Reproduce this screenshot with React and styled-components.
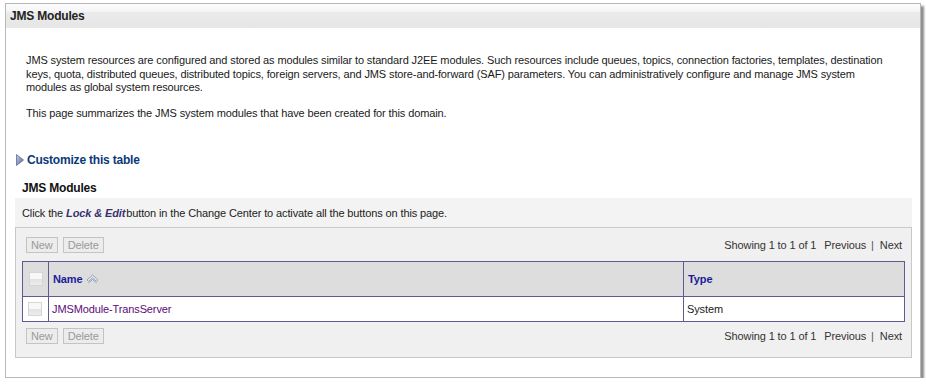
import React from "react";
import styled, { createGlobalStyle } from "styled-components";

const GlobalStyle = createGlobalStyle`
  html, body {
    margin: 0;
    padding: 0;
    background: #fff;
  }
  body {
    font-family: "Liberation Sans", Arial, sans-serif;
    font-size: 11px;
    letter-spacing: -0.12px;
    color: #000;
  }
`;

const Frame = styled.div`
  margin: 3px 0 0 5px;
  width: 916px;
  height: 375px;
  border: 1px solid #b8b8b8;
  box-shadow: 3px 3px 2px rgba(0, 0, 0, 0.45);
  background: #fff;
  box-sizing: border-box;
`;

const TitleBar = styled.div`
  height: 24px;
  display: flex;
  align-items: center;
  padding-left: 4px;
  font-size: 12px;
  font-weight: bold;
  letter-spacing: -0.2px;
  color: #222;
  background: linear-gradient(to bottom, #fbfbfb 0, #f6f6f6 30%, #ebebeb 35%, #e6e6e6 100%);
`;

const Body = styled.div`
  padding: 0 8px 0 9px;
`;

const Intro = styled.div`
  padding: 26px 10px 0 11px;
`;

const Paragraph = styled.p`
  margin: 0 0 12px;
  line-height: 13.5px;
  font-size: 11px;
  color: #1a1a1a;
  white-space: nowrap;
`;

const CustomizeLink = styled.a`
  display: flex;
  align-items: center;
  gap: 3px;
  margin: 33px 0 0 1px;
  font-size: 12px;
  font-weight: bold;
  letter-spacing: -0.2px;
  color: #0a3a7a;
  text-decoration: none;
`;

const TableTitle = styled.div`
  margin: 14px 0 0 7px;
  height: 17px;
  font-size: 12px;
  font-weight: bold;
  letter-spacing: -0.2px;
  color: #111;
`;

const Notice = styled.div`
  background: #f3f3f3;
  height: 29px;
  display: flex;
  align-items: center;
  padding-left: 7px;
  font-size: 11px;
  color: #222;
  border-bottom: 1px solid #c8c8c8;

  em {
    font-weight: bold;
    color: #3a3270;
    margin-right: 1px;
  }
`;

const TableArea = styled.div`
  background: #f0f0f0;
  border: 1px solid #c8c8c8;
  border-top: none;
  padding: 0 6px 7px 6px;
`;

const NavRow = styled.div`
  display: flex;
  align-items: center;
  justify-content: space-between;
  height: ${(p) => p.$h}px;
  padding: 0 3px 0 4px;
`;

const Buttons = styled.div`
  display: flex;
  gap: 5px;
`;

const DisabledButton = styled.span`
  display: inline-block;
  height: 14px;
  line-height: 14px;
  padding: 0 4px;
  border: 1px solid #c4c4c4;
  background: #ececec;
  color: #9a9a9a;
  font-size: 11px;
`;

const Pager = styled.div`
  font-size: 11px;
  color: #333;
  display: flex;
  align-items: center;

  span.sep {
    margin: 0 6px 0 5px;
    color: #555;
  }
  span.prev {
    margin-left: 8px;
  }
`;

const Table = styled.table`
  width: 100%;
  border-collapse: collapse;
  border: 1px solid #5e5a92;
  background: #fff;
`;

const HeadCell = styled.th`
  height: 34px;
  padding: 0 0 0 4px;
  background: #dddddd;
  border-left: ${(p) => (p.$first ? "none" : "1px solid #5e5a92")};
  text-align: left;
  font-size: 11px;
  font-weight: bold;
  color: #1c1c9a;
  width: ${(p) => p.$w || "auto"};
`;

const Cell = styled.td`
  height: 24px;
  padding: 0 0 0 3px;
  border-left: ${(p) => (p.$first ? "none" : "1px solid #5e5a92")};
  border-top: 1px solid #5e5a92;
  font-size: 11px;
  color: ${(p) => (p.$link ? "#5c0c78" : "#222")};
`;

const CheckBox = styled.span`
  display: block;
  width: 12px;
  height: 12px;
  margin-left: 2px;
  border: 1px solid #d6d6d6;
  background: linear-gradient(to bottom, #f8f8f8 0, #f8f8f8 50%, #e2e2e2 50%, #ececec 100%);
`;

const SortLabel = styled.span`
  display: inline-flex;
  align-items: center;
  gap: 4px;
`;

const Triangle = () => (
  <svg width="8" height="12" viewBox="0 0 8 12">
    <defs>
      <linearGradient id="tri" x1="0" y1="0" x2="1" y2="1">
        <stop offset="0" stopColor="#c9d3e6" />
        <stop offset="1" stopColor="#4a5f94" />
      </linearGradient>
    </defs>
    <path d="M0.5 0.5 L7.5 6 L0.5 11.5 Z" fill="url(#tri)" stroke="#5b6c98" strokeWidth="0.8" />
  </svg>
);

const SortIcon = () => (
  <svg width="13" height="10" viewBox="0 0 13 10">
    <path d="M1 6 L6.5 1 L12 6 L10.5 7.4 L6.5 3.8 L2.5 7.4 Z" fill="#e4e8f2" stroke="#8d9bb9" strokeWidth="0.9" />
    <path d="M2.5 9 L6.5 5.4 L10.5 9" fill="none" stroke="#8d9bb9" strokeWidth="0.9" />
  </svg>
);

const NavBar = ({ h }) => (
  <NavRow $h={h}>
    <Buttons>
      <DisabledButton>New</DisabledButton>
      <DisabledButton>Delete</DisabledButton>
    </Buttons>
    <Pager>
      Showing 1 to 1 of 1<span className="prev">Previous</span>
      <span className="sep">|</span>Next
    </Pager>
  </NavRow>
);

const App = () => (
  <>
    <GlobalStyle />
    <Frame>
      <TitleBar>JMS Modules</TitleBar>
      <Body>
        <Intro>
          <Paragraph>
            JMS system resources are configured and stored as modules similar to standard J2EE modules. Such resources include queues, topics, connection factories, templates, destination
            <br />
            keys, quota, distributed queues, distributed topics, foreign servers, and JMS store-and-forward (SAF) parameters. You can administratively configure and manage JMS system
            <br />
            modules as global system resources.
          </Paragraph>
          <Paragraph>This page summarizes the JMS system modules that have been created for this domain.</Paragraph>
        </Intro>
        <CustomizeLink href="#">
          <Triangle />
          Customize this table
        </CustomizeLink>
        <TableTitle>JMS Modules</TableTitle>
        <Notice>
          Click the&nbsp;<em>Lock &amp; Edit</em>button in the Change Center to activate all the buttons on this page.
        </Notice>
        <TableArea>
          <NavBar h={33} />
          <Table>
            <thead>
              <tr>
                <HeadCell $w="21px" $first>
                  <CheckBox />
                </HeadCell>
                <HeadCell>
                  <SortLabel>
                    Name <SortIcon />
                  </SortLabel>
                </HeadCell>
                <HeadCell $w="216px">Type</HeadCell>
              </tr>
            </thead>
            <tbody>
              <tr>
                <Cell $first>
                  <CheckBox />
                </Cell>
                <Cell $link>JMSModule-TransServer</Cell>
                <Cell>System</Cell>
              </tr>
            </tbody>
          </Table>
          <NavBar h={28} />
        </TableArea>
      </Body>
    </Frame>
  </>
);

export default App;
